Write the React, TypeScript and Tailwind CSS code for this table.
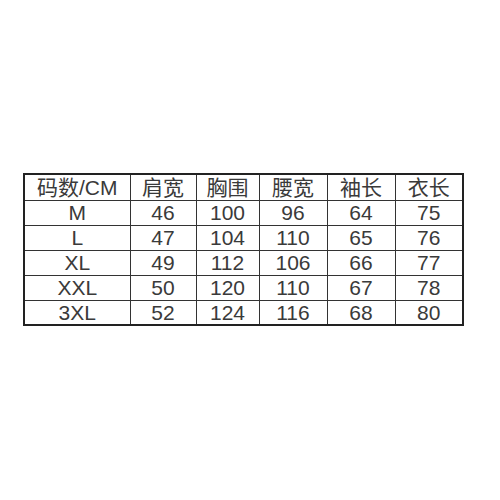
const headers = ['码数/CM', '肩宽', '胸围', '腰宽', '袖长', '衣长']
const widths = ['w-[106px]', 'w-[66px]', 'w-[63px]', 'w-[68px]', 'w-[68px]', 'w-[68px]']

const rows = [
  ['M', '46', '100', '96', '64', '75'],
  ['L', '47', '104', '110', '65', '76'],
  ['XL', '49', '112', '106', '66', '77'],
  ['XXL', '50', '120', '110', '67', '78'],
  ['3XL', '52', '124', '116', '68', '80'],
]

export default function App() {
  return (
    <div className="w-[500px] h-[500px] bg-white pt-[173px] pl-[23px]">
      <table
        className="border-collapse border-2 border-[#222] text-[#3a3a3a] text-[21px] leading-none"
        style={{ fontFamily: '"Liberation Sans", Arial, "Noto Sans CJK SC", sans-serif' }}
      >
        <thead>
          <tr className="h-[26px]">
            {headers.map((h, i) => (
              <th key={h} className={`${widths[i]} border border-[#333] font-normal text-center p-0`}>
                {h}
              </th>
            ))}
          </tr>
        </thead>
        <tbody>
          {rows.map((r) => (
            <tr key={r[0]} className="h-[25px]">
              {r.map((c, i) => (
                <td key={i} className={`${widths[i]} border border-[#333] text-center p-0`}>
                  {c}
                </td>
              ))}
            </tr>
          ))}
        </tbody>
      </table>
    </div>
  )
}
